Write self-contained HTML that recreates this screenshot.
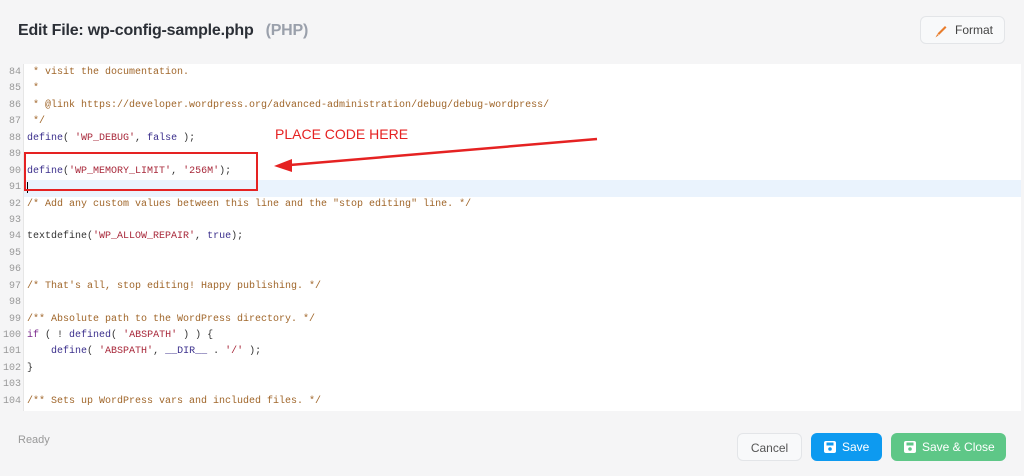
<!DOCTYPE html>
<html><head><style>
body{margin:0;width:1024px;height:476px;background:#f5f5f6;font-family:"Liberation Sans",sans-serif;position:relative;overflow:hidden}
.title{position:absolute;left:18px;top:22px;font-size:16px;font-weight:bold;color:#2b2f36;letter-spacing:-0.2px}
.title span{color:#9aa0ab;font-weight:bold;margin-left:12px}
.fmt{position:absolute;left:920px;top:16px;width:85px;height:28px;border:1px solid #e3e5e8;border-radius:6px;background:#f8f9fa;font-size:12px;color:#444;box-sizing:border-box;line-height:27px;padding-left:34px}
.ed{position:absolute;left:0;top:64px;width:1021px;height:347px;background:#fff;overflow:hidden}
.gut{position:absolute;left:0;top:0;width:23px;height:100%;background:#f5f5f6;border-right:1px solid #e6e6e6}
.lines{position:absolute;left:0;top:1px;width:1021px;font-family:"Liberation Mono",monospace;font-size:10px;line-height:16.45px}
.l{position:relative;height:16.45px;white-space:pre}
.n{display:inline-block;width:21px;text-align:right;color:#999;margin-right:6px}
.c{color:#a0662a}.k{color:#3b2f8c}.s{color:#a8283a}.p{color:#333}.kw{color:#7a2a8c}
.hl{background:#eaf3fd;position:absolute;left:24px;right:0;top:0;height:16.45px}
.ready{position:absolute;left:18px;top:434px;font-size:11px;color:#999}
.btn{position:absolute;top:433px;height:28px;border-radius:6px;font-size:12px;line-height:28px;box-sizing:border-box;text-align:left}
</style></head><body>
<div class="title">Edit File: wp-config-sample.php<span>(PHP)</span></div>
<div class="fmt"><svg style="position:absolute;left:14px;top:8px" width="12" height="13" viewBox="0 0 12 13"><path d="M10 1 L11.5 2.5 L4 10 L2.5 8.5Z" fill="#e87d2c"/><path d="M2.3 9 L3.6 10.3 L0.5 12.5Z" fill="#e87d2c"/></svg>Format</div>
<div class="ed"><div class="gut"></div>
<div class="lines"><div class="l"><span class="n">84</span><span class="c"> * visit the documentation.</span></div><div class="l"><span class="n">85</span><span class="c"> *</span></div><div class="l"><span class="n">86</span><span class="c"> * @link https://developer.wordpress.org/advanced-administration/debug/debug-wordpress/</span></div><div class="l"><span class="n">87</span><span class="c"> */</span></div><div class="l"><span class="n">88</span><span class="k">define</span><span class="p">( </span><span class="s">'WP_DEBUG'</span><span class="p">, </span><span class="k">false</span><span class="p"> );</span></div><div class="l"><span class="n">89</span></div><div class="l"><span class="n">90</span><span class="k">define</span><span class="p">(</span><span class="s">'WP_MEMORY_LIMIT'</span><span class="p">, </span><span class="s">'256M'</span><span class="p">);</span></div><div class="l"><div class="hl"></div><span class="n" style="position:relative">91</span><span style="position:relative;border-left:1px solid #000"></span></div><div class="l"><span class="n">92</span><span class="c">/* Add any custom values between this line and the "stop editing" line. */</span></div><div class="l"><span class="n">93</span></div><div class="l"><span class="n">94</span><span class="p">textdefine(</span><span class="s">'WP_ALLOW_REPAIR'</span><span class="p">, </span><span class="k">true</span><span class="p">);</span></div><div class="l"><span class="n">95</span></div><div class="l"><span class="n">96</span></div><div class="l"><span class="n">97</span><span class="c">/* That's all, stop editing! Happy publishing. */</span></div><div class="l"><span class="n">98</span></div><div class="l"><span class="n">99</span><span class="c">/** Absolute path to the WordPress directory. */</span></div><div class="l"><span class="n">100</span><span class="kw">if</span><span class="p"> ( ! </span><span class="k">defined</span><span class="p">( </span><span class="s">'ABSPATH'</span><span class="p"> ) ) {</span></div><div class="l"><span class="n">101</span><span class="p">    </span><span class="k">define</span><span class="p">( </span><span class="s">'ABSPATH'</span><span class="p">, </span><span class="k">__DIR__</span><span class="p"> . </span><span class="s">'/'</span><span class="p"> );</span></div><div class="l"><span class="n">102</span><span class="p">}</span></div><div class="l"><span class="n">103</span></div><div class="l"><span class="n">104</span><span class="c">/** Sets up WordPress vars and included files. */</span></div></div></div>
<div style="position:absolute;left:24px;top:152px;width:230px;height:35px;border:2px solid #e52222"></div>
<div style="position:absolute;left:275px;top:126px;font-size:14px;color:#e52222">PLACE CODE HERE</div>
<svg style="position:absolute;left:0;top:0" width="1024" height="476"><line x1="597" y1="139" x2="290" y2="165" stroke="#e52222" stroke-width="2.5"/><path d="M274 166 L292 159 L292 172Z" fill="#e52222"/></svg>
<div class="ready">Ready</div>
<div class="btn" style="left:737px;width:65px;background:#f8f9fa;border:1px solid #e3e5e8;color:#555;text-align:center">Cancel</div>
<div class="btn" style="left:811px;width:71px;background:#0d9af0;color:#fff;padding-left:31px"><svg style="position:absolute;left:13px;top:8px" width="12" height="12" viewBox="0 0 12 12"><rect x="0" y="0" width="12" height="12" rx="2" fill="#fff"/><rect x="2.5" y="1.5" width="7" height="3" fill="#0d9af0"/><circle cx="6" cy="8" r="1.8" fill="#0d9af0"/></svg>Save</div>
<div class="btn" style="left:891px;width:115px;background:#5ec787;color:#fff;padding-left:31px"><svg style="position:absolute;left:13px;top:8px" width="12" height="12" viewBox="0 0 12 12"><rect x="0" y="0" width="12" height="12" rx="2" fill="#fff"/><rect x="2.5" y="1.5" width="7" height="3" fill="#5ec787"/><circle cx="6" cy="8" r="1.8" fill="#5ec787"/></svg>Save &amp; Close</div>
</body></html>
